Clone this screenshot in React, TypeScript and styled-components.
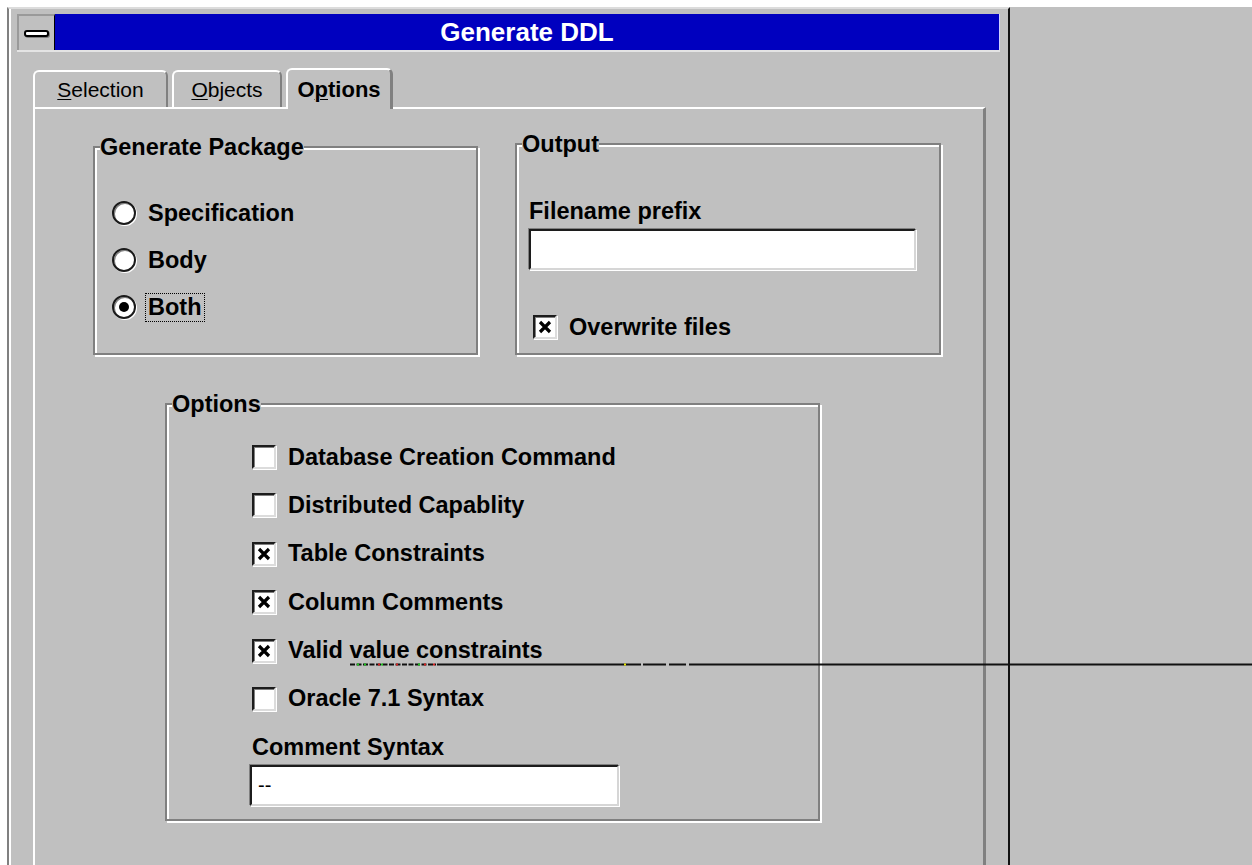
import React from "react";
import styled, { createGlobalStyle, css } from "styled-components";

const GlobalStyle = createGlobalStyle`
  html, body {
    margin: 0;
    padding: 0;
    background: #fff;
  }
  body {
    font-family: "Liberation Sans", Arial, sans-serif;
    color: #000;
  }
`;

const Screen = styled.div`
  position: relative;
  display: flex;
  width: 1252px;
  height: 865px;
  box-sizing: border-box;
  padding: 7px 0 0 7px;
  background: #fff;
  overflow: hidden;
`;

const Window = styled.div`
  display: flex;
  flex-direction: column;
  width: 1003px;
  box-sizing: border-box;
  padding: 5px 8px 0 8px;
  background: #c0c0c0;
  border-top: 2px solid #dcdcdc;
  border-left: 2px solid #808080;
  border-right: 2px solid #111;
  box-shadow: inset 2px 0 0 #fff;
`;

const Desktop = styled.div`
  flex: 1;
  background: #c0c0c0;
`;

const TitleBar = styled.div`
  display: flex;
  height: 36px;
  border-bottom: 2px solid #e4e4e4;
`;

const SystemMenu = styled.div`
  display: flex;
  align-items: center;
  justify-content: center;
  width: 38px;
  box-sizing: border-box;
  background: #c0c0c0;
  border-top: 2px solid #9a9a9a;
  border-left: 2px solid #9a9a9a;
  border-right: 1px solid #000;
`;

const MenuDash = styled.div`
  width: 25px;
  height: 7px;
  box-sizing: border-box;
  background: #fff;
  border: 2px solid #000;
  border-radius: 3px;
  box-shadow: 1px 1px 0 #808080;
`;

const Caption = styled.div`
  flex: 1;
  display: flex;
  align-items: center;
  justify-content: center;
  background: #0000bf;
  border-right: 1px solid #d0d0ff;
  color: #fff;
  font-weight: bold;
  font-size: 26px;
`;

const TabStrip = styled.div`
  display: flex;
  align-items: flex-end;
  gap: 4px;
  margin: 16px 0 0 16px;
`;

const Tab = styled.div<{ $active?: boolean; $width: number }>`
  position: relative;
  display: flex;
  align-items: center;
  justify-content: center;
  width: ${({ $width }) => $width}px;
  height: 37px;
  box-sizing: border-box;
  background: #c0c0c0;
  border-top: 2px solid #fff;
  border-left: 2px solid #fff;
  border-right: 2px solid #808080;
  border-radius: 6px 6px 0 0;
  font-size: 21px;

  u {
    text-decoration-thickness: 1px;
    text-underline-offset: 2px;
  }

  ${({ $active }) =>
    $active &&
    css`
      z-index: 1;
      height: 41px;
      margin-bottom: -2px;
      border-right: 3px solid #808080;
      font-weight: bold;
      font-size: 22px;
    `}
`;

const Panel = styled.div`
  flex: 1;
  width: 953px;
  margin-left: 16px;
  box-sizing: border-box;
  border-top: 2px solid #fff;
  border-left: 2px solid #fff;
  border-right: 3px solid #808080;
`;

const TopRow = styled.div`
  display: flex;
  align-items: flex-start;
  gap: 37px;
  padding: 23px 0 0 58px;
`;

const Group = styled.fieldset<{ $width: number; $height: number; $top?: number; $left?: number }>`
  margin: ${({ $top }) => $top ?? 0}px 0 0 ${({ $left }) => $left ?? 0}px;
  padding: 0;
  min-width: 0;
  width: ${({ $width }) => $width}px;
  height: ${({ $height }) => $height}px;
  box-sizing: border-box;
  border: 2px solid #808080;
  box-shadow: inset 2px 2px 0 #fff, 2px 2px 0 #fff;
`;

const GroupTitle = styled.legend`
  margin-left: 5px;
  padding: 0;
  background: #c0c0c0;
  font-weight: bold;
  font-size: 23.5px;
  line-height: 24px;
`;

const RadioList = styled.div`
  display: flex;
  flex-direction: column;
  gap: 17px;
  padding: 39px 0 0 17px;
`;

const OutputBody = styled.div`
  display: flex;
  flex-direction: column;
  align-items: flex-start;
  padding: 42px 0 0 12px;
`;

const OptionsBody = styled.div`
  display: flex;
  flex-direction: column;
  align-items: flex-start;
  padding: 26px 0 0 85px;
`;

const CheckList = styled.div`
  display: flex;
  flex-direction: column;
  gap: 18.4px;
`;

const Row = styled.div<{ $indent?: number; $top?: number }>`
  display: flex;
  align-items: center;
  gap: 9px;
  height: 30px;
  margin-left: ${({ $indent }) => $indent ?? 0}px;
  margin-top: ${({ $top }) => $top ?? 0}px;
`;

const Label = styled.span<{ $focused?: boolean }>`
  padding: 0 2px;
  border: 1px ${({ $focused }) => ($focused ? "dotted #000" : "solid transparent")};
  font-weight: bold;
  font-size: 23.5px;
  line-height: 27px;
  white-space: nowrap;
`;

const FieldLabel = styled.div<{ $top?: number }>`
  margin-top: ${({ $top }) => $top ?? 0}px;
  font-weight: bold;
  font-size: 23.5px;
  line-height: 26px;
`;

const TextField = styled.input<{ $width: number; $shift?: number }>`
  width: ${({ $width }) => $width}px;
  height: 41px;
  margin: 5px 0 0 ${({ $shift }) => $shift ?? 0}px;
  padding: 0 0 0 6px;
  box-sizing: border-box;
  background: #fff;
  border-style: solid;
  border-width: 2px;
  border-color: #1c1c1c #d6d6d6 #d6d6d6 #1c1c1c;
  box-shadow: -1px -1px 0 #808080, 1px 1px 0 #fff;
  font-family: "Liberation Sans", Arial, sans-serif;
  font-size: 20px;
  color: #000;
  outline: none;
`;

const RadioCircle = styled.span<{ $checked?: boolean }>`
  display: flex;
  align-items: center;
  justify-content: center;
  width: 24px;
  height: 24px;
  box-sizing: border-box;
  border-radius: 50%;
  background: #fff;
  border: 2px solid #1a1a1a;
  box-shadow: 1px 1px 0 #fff, inset 1px 1px 0 #808080;

  &::after {
    content: "";
    width: 10px;
    height: 10px;
    border-radius: 50%;
    background: ${({ $checked }) => ($checked ? "#000" : "transparent")};
  }
`;

const CheckBox = styled.span`
  display: flex;
  align-items: center;
  justify-content: center;
  width: 24px;
  height: 24px;
  box-sizing: border-box;
  background: #fff;
  border-style: solid;
  border-width: 2px;
  border-color: #1c1c1c #dcdcdc #dcdcdc #1c1c1c;
  box-shadow: inset 1px 1px 0 #808080, 1px 1px 0 #fff;
`;

const Overlay = styled.svg`
  position: absolute;
  top: 0;
  left: 0;
  pointer-events: none;
`;

type Choice = { label: string; checked?: boolean; focused?: boolean };

const packageChoices: Choice[] = [
  { label: "Specification" },
  { label: "Body" },
  { label: "Both", checked: true, focused: true },
];

const ddlOptions: Choice[] = [
  { label: "Database Creation Command" },
  { label: "Distributed Capablity" },
  { label: "Table Constraints", checked: true },
  { label: "Column Comments", checked: true },
  { label: "Valid value constraints", checked: true },
  { label: "Oracle 7.1 Syntax" },
];

const Check: React.FC<{ checked?: boolean }> = ({ checked }) => (
  <CheckBox>
    {checked && (
      <svg width="14" height="14" viewBox="0 0 14 14">
        <path d="M2 2 L12 12 M12 2 L2 12" stroke="#000" strokeWidth="3.2" />
      </svg>
    )}
  </CheckBox>
);

// stray cursor trace running across the dialog
const TraceLine: React.FC = () => (
  <Overlay width="1252" height="865">
    <g stroke="#111" strokeWidth="2">
      <line x1="350" y1="664.5" x2="436" y2="664.5" strokeDasharray="5 1.5" />
      <line x1="437" y1="664.5" x2="641" y2="664.5" />
      <line x1="643" y1="664.5" x2="666" y2="664.5" />
      <line x1="669" y1="664.5" x2="686" y2="664.5" />
      <line x1="689" y1="664.5" x2="1252" y2="664.5" />
    </g>
    <g>
      <rect x="357" y="663.5" width="2" height="2" fill="#1fc41f" />
      <rect x="364" y="663.5" width="2" height="2" fill="#1fc41f" />
      <rect x="378" y="663.5" width="2" height="2" fill="#d42020" />
      <rect x="381" y="663.5" width="2" height="2" fill="#1fc41f" />
      <rect x="396" y="663.5" width="2" height="2" fill="#d42020" />
      <rect x="418" y="663.5" width="2" height="2" fill="#1fc41f" />
      <rect x="424" y="663.5" width="2" height="2" fill="#d42020" />
      <rect x="433" y="663.5" width="2" height="2" fill="#d42020" />
      <rect x="624" y="663.5" width="2" height="2" fill="#e6e600" />
    </g>
  </Overlay>
);

const App: React.FC = () => {
  return (
    <Screen>
      <GlobalStyle />
      <Window>
        <TitleBar>
          <SystemMenu>
            <MenuDash />
          </SystemMenu>
          <Caption>Generate DDL</Caption>
        </TitleBar>

        <TabStrip>
          <Tab $width={135}>
            <span>
              <u>S</u>election
            </span>
          </Tab>
          <Tab $width={110}>
            <span>
              <u>O</u>bjects
            </span>
          </Tab>
          <Tab $width={107} $active>
            <span>
              O<u>p</u>tions
            </span>
          </Tab>
        </TabStrip>

        <Panel>
          <TopRow>
            <Group $width={385} $height={220} $top={3}>
              <GroupTitle>Generate Package</GroupTitle>
              <RadioList>
                {packageChoices.map((choice) => (
                  <Row key={choice.label}>
                    <RadioCircle $checked={choice.checked} />
                    <Label $focused={choice.focused}>{choice.label}</Label>
                  </Row>
                ))}
              </RadioList>
            </Group>

            <Group $width={426} $height={223}>
              <GroupTitle>Output</GroupTitle>
              <OutputBody>
                <FieldLabel>Filename prefix</FieldLabel>
                <TextField $width={387} readOnly defaultValue="" />
                <Row $indent={4} $top={42}>
                  <Check checked />
                  <Label>Overwrite files</Label>
                </Row>
              </OutputBody>
            </Group>
          </TopRow>

          <Group $width={655} $height={429} $top={37} $left={130}>
            <GroupTitle>Options</GroupTitle>
            <OptionsBody>
              <CheckList>
                {ddlOptions.map((option) => (
                  <Row key={option.label}>
                    <Check checked={option.checked} />
                    <Label>{option.label}</Label>
                  </Row>
                ))}
              </CheckList>
              <FieldLabel $top={20}>Comment Syntax</FieldLabel>
              <TextField $width={369} $shift={-2} readOnly defaultValue="--" />
            </OptionsBody>
          </Group>
        </Panel>
      </Window>
      <Desktop />
      <TraceLine />
    </Screen>
  );
};

export default App;
